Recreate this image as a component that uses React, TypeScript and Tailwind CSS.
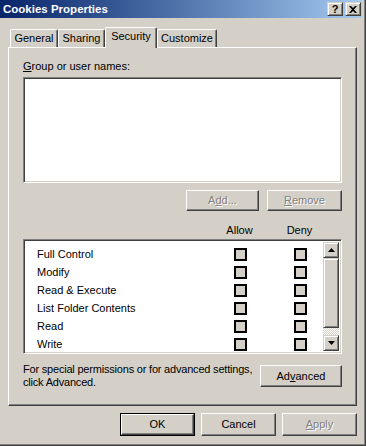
import type { ReactNode } from "react"

// Win2000 classic bevels
const raised =
  "border border-t-white border-l-white border-r-[#404040] border-b-[#404040] shadow-[inset_-1px_-1px_0_#808080]"
const raisedSmall =
  "border border-t-[#d4d0c8] border-l-[#d4d0c8] border-r-[#404040] border-b-[#404040] shadow-[inset_1px_1px_0_#fff,inset_-1px_-1px_0_#808080]"
const sunken =
  "border border-t-[#808080] border-l-[#808080] border-r-white border-b-white shadow-[inset_1px_1px_0_#404040,inset_-1px_-1px_0_#d4d0c8]"
const disabledText = "text-[#808080] [text-shadow:1px_1px_0_#fff]"

const permissions = [
  "Full Control",
  "Modify",
  "Read & Execute",
  "List Folder Contents",
  "Read",
  "Write",
]

const tabs = ["General", "Sharing", "Security", "Customize"]
const tabWidths: Record<string, string> = {
  General: "w-[48px]",
  Sharing: "w-[47px]",
  Security: "w-[52px]",
  Customize: "w-[60px]",
}

const Button = (props: {
  children: ReactNode
  className?: string
  disabled?: boolean
  isDefault?: boolean
}) => {
  if (props.isDefault) {
    return (
      <div
        className={`border border-black flex ${props.className ?? ""}`}
      >
        <div className={`flex-1 flex items-center justify-center ${raised}`}>
          {props.children}
        </div>
      </div>
    )
  }
  return (
    <div
      className={`flex items-center justify-center ${raised} ${props.className ?? ""} ${props.disabled ? disabledText : ""}`}
    >
      {props.children}
    </div>
  )
}

const TitleBar = () => (
  <div className="h-[18px] w-full flex items-center bg-linear-to-r from-[#0a246a] to-[#a6caf0] pl-[3px] pr-[1px]">
    <span className="text-white font-bold text-[11.5px] flex-1">
      Cookies Properties
    </span>
    <div className="flex gap-[2px]">
      <div
        className={`w-[16px] h-[14px] bg-[#d4d0c8] flex items-center justify-center ${raisedSmall}`}
      >
        <span className="font-bold text-[11px] leading-[10px]">?</span>
      </div>
      <div
        className={`w-[16px] h-[14px] bg-[#d4d0c8] flex items-center justify-center ${raisedSmall}`}
      >
        <svg width="8" height="7" viewBox="0 0 8 7">
          <path
            d="M0 0h2l2 2 2-2h2L5 3.5 8 7H6L4 5 2 7H0l3-3.5z"
            fill="#000"
          />
        </svg>
      </div>
    </div>
  </div>
)

const Tabs = () => (
  <div className="flex items-end h-[20px] pl-[2px]">
    {tabs.map((t) => {
      const active = t === "Security"
      return (
        <div
          key={t}
          className={`${tabWidths[t]} ${
            active
              ? "h-[21px] -mb-[1px] relative z-10 pb-[3px]"
              : "h-[18px] pb-[1px]"
          } bg-[#d4d0c8] border-t border-l border-r border-t-white border-l-white border-r-[#404040] rounded-t-[2px] shadow-[inset_-1px_0_0_#808080] flex items-center justify-center`}
        >
          {t}
        </div>
      )
    })}
  </div>
)

const Checkbox = () => (
  <div className="w-[13px] h-[13px] border-2 border-black bg-[#d4d0c8]" />
)

const ScrollBar = () => (
  <div className="w-[16px] flex flex-col h-full">
    <div
      className={`h-[16px] bg-[#d4d0c8] flex items-center justify-center ${raisedSmall}`}
    >
      <svg width="7" height="4" viewBox="0 0 7 4">
        <path d="M3.5 0L7 4H0z" fill="#000" />
      </svg>
    </div>
    <div className={`h-[70px] bg-[#d4d0c8] ${raisedSmall}`} />
    <div className="flex-1 bg-[repeating-conic-gradient(#fff_0_25%,#d4d0c8_0_50%)] bg-[length:2px_2px]" />
    <div
      className={`h-[16px] bg-[#d4d0c8] flex items-center justify-center ${raisedSmall}`}
    >
      <svg width="7" height="4" viewBox="0 0 7 4">
        <path d="M0 0h7L3.5 4z" fill="#000" />
      </svg>
    </div>
  </div>
)

const Panel = () => (
  <div className={`w-[349px] h-[359px] bg-[#d4d0c8] pt-[12px] pl-[14px] ${raised}`}>
    <div>
      <u>G</u>roup or user names:
    </div>
    <div className={`w-[319px] h-[106px] mt-[4px] bg-white ${sunken}`} />
    <div className="w-[319px] flex justify-end gap-[8px] mt-[7px]">
      <Button disabled className="w-[73px] h-[21px]">
        A<u>d</u>d...
      </Button>
      <Button disabled className="w-[75px] h-[21px]">
        <u>R</u>emove
      </Button>
    </div>
    <div className="grid grid-cols-[197px_13px_47px_13px] pl-[13px] mt-[13px]">
      <div />
      <div className="flex justify-center whitespace-nowrap">Allow</div>
      <div />
      <div className="flex justify-center whitespace-nowrap">Deny</div>
    </div>
    <div className={`w-[319px] h-[115px] mt-[2px] bg-white flex p-[2px] ${sunken}`}>
      <div className="flex-1 pt-[3px] pl-[11px]">
        {permissions.map((p) => (
          <div
            key={p}
            className="grid grid-cols-[197px_13px_47px_13px] h-[18px] items-center"
          >
            <div className="whitespace-nowrap">{p}</div>
            <Checkbox />
            <div />
            <Checkbox />
          </div>
        ))}
      </div>
      <ScrollBar />
    </div>
    <div className="w-[319px] flex items-center justify-between mt-[9px]">
      <div className="whitespace-nowrap tracking-[-0.2px]">
        For special permissions or for advanced settings,
        <br />
        click Advanced.
      </div>
      <Button className="w-[82px] h-[22px]">
        Ad<u>v</u>anced
      </Button>
    </div>
  </div>
)

export default function App() {
  return (
    <div className="w-[366px] h-[446px] bg-[#d4d0c8] border-r border-b border-[#404040] font-['Liberation_Sans',Arial,sans-serif] text-[11px] leading-[13px] text-black select-none">
      <div className="h-full border-r border-b border-[#808080] pr-[2px] pb-[2px] flex flex-col">
        <TitleBar />
        <div className="flex flex-col pl-[8px] pt-[9px]">
          <Tabs />
          <Panel />
          <div className="flex justify-end gap-[6px] mt-[7px] pr-[5px]">
            <Button isDefault className="w-[75px] h-[23px]">
              OK
            </Button>
            <Button className="w-[75px] h-[23px]">Cancel</Button>
            <Button disabled className="w-[75px] h-[23px]">
              <u>A</u>pply
            </Button>
          </div>
        </div>
      </div>
    </div>
  )
}
